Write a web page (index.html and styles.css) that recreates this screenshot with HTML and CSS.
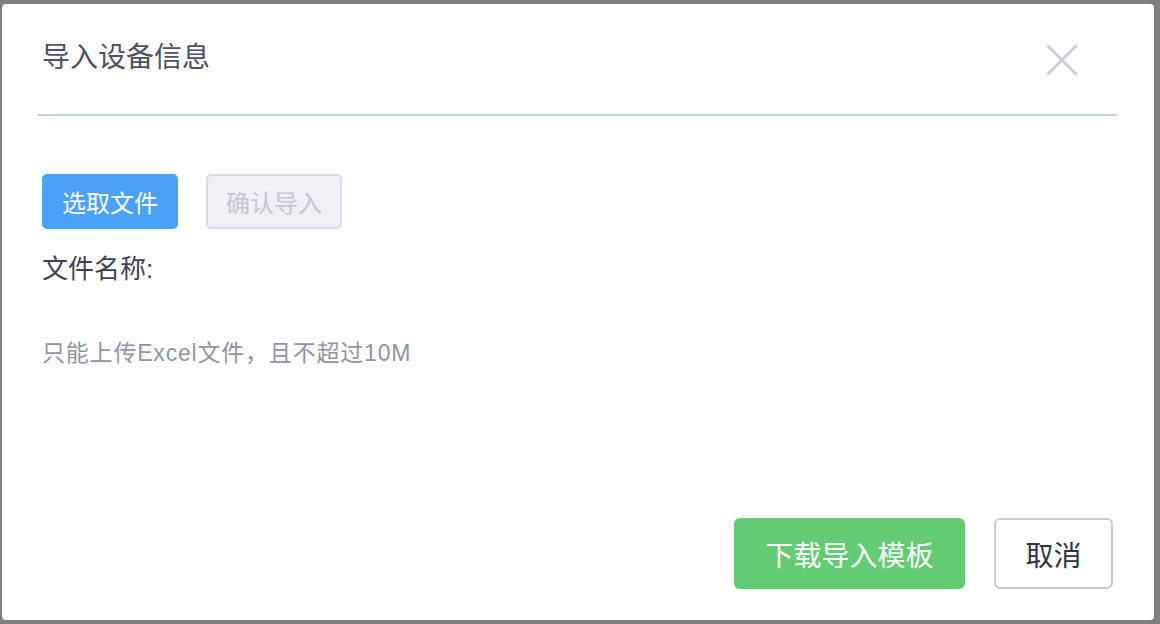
FILE: index.html
```html
<!DOCTYPE html>
<html>
<head>
    <title>导入设备信息</title>
    <link rel="stylesheet" href="styles.css">
</head>
<body>

<div class="dialog">
    <div class="dialog-header">
        <span class="dialog-title">导入设备信息</span>
        <button class="dialog-close" type="button">
            <svg width="32" height="32" viewBox="0 0 32 32">
                <path d="M2 2 L30 30 M30 2 L2 30" stroke="#c8d0dc" stroke-width="3" stroke-linecap="round" fill="none"/>
            </svg>
        </button>
    </div>

    <div class="dialog-body">
        <div class="upload-actions">
            <button class="btn btn-primary" type="button">选取文件</button>
            <button class="btn btn-disabled" type="button" disabled>确认导入</button>
        </div>
        <div class="file-name">文件名称:</div>
        <div class="upload-tip">只能上传Excel文件，且不超过10M</div>
    </div>

    <div class="dialog-footer">
        <button class="btn btn-large btn-success" type="button">下载导入模板</button>
        <button class="btn btn-large btn-default" type="button">取消</button>
    </div>
</div>

</body>
</html>
```

FILE: styles.css
```css
html, body {
    margin: 0;
    height: 100%;
}
body {
    font-family: "Liberation Sans", "Noto Sans CJK SC", sans-serif;
    background-color: #7f7f7f;
    padding: 4px 6px 4px 2px;
    box-sizing: border-box;
}
.dialog {
    background-color: white;
    border-radius: 4px;
    height: 616px;
    display: flex;
    flex-direction: column;
}
.dialog-header {
    display: flex;
    align-items: flex-start;
    justify-content: space-between;
    margin: 0 37px 0 36px;
    padding: 34px 4px 0 4px;
    height: 112px;
    box-sizing: border-box;
    border-bottom: 2px solid #c8d0da;
}
.dialog-title {
    font-size: 28px;
    line-height: 40px;
    color: #4a5263;
}
.dialog-close {
    border: none;
    background: none;
    padding: 0;
    width: 32px;
    height: 32px;
    margin-right: 35px;
    margin-top: 6px;
    cursor: pointer;
}
.dialog-body {
    padding: 58px 40px 0 40px;
}
.upload-actions {
    display: flex;
    gap: 28px;
}
.btn {
    font-family: inherit;
    cursor: pointer;
    box-sizing: border-box;
    border-radius: 5px;
    padding: 0;
}
.btn-primary, .btn-disabled {
    width: 136px;
    height: 55px;
    font-size: 24px;
}
.btn-primary {
    background-color: #49a2f7;
    border: none;
    color: white;
}
.btn-disabled {
    background-color: #eef1f6;
    border: 2px solid #d7dee8;
    color: #c0c8d4;
    cursor: not-allowed;
}
.file-name {
    margin-top: 20px;
    font-size: 26px;
    line-height: 40px;
    color: #3c4454;
}
.upload-tip {
    margin-top: 48px;
    font-size: 23px;
    line-height: 32px;
    letter-spacing: 0.8px;
    color: #8c96a5;
}
.dialog-footer {
    margin-top: auto;
    display: flex;
    justify-content: flex-end;
    gap: 29px;
    padding: 0 41px 31px 0;
}
.btn-large {
    height: 71px;
    font-size: 28px;
    border-radius: 6px;
}
.btn-success {
    width: 231px;
    background-color: #62cb74;
    border: none;
    color: white;
}
.btn-default {
    width: 119px;
    background-color: white;
    border: 2px solid #c9c9c9;
    color: #2d3440;
}
```
